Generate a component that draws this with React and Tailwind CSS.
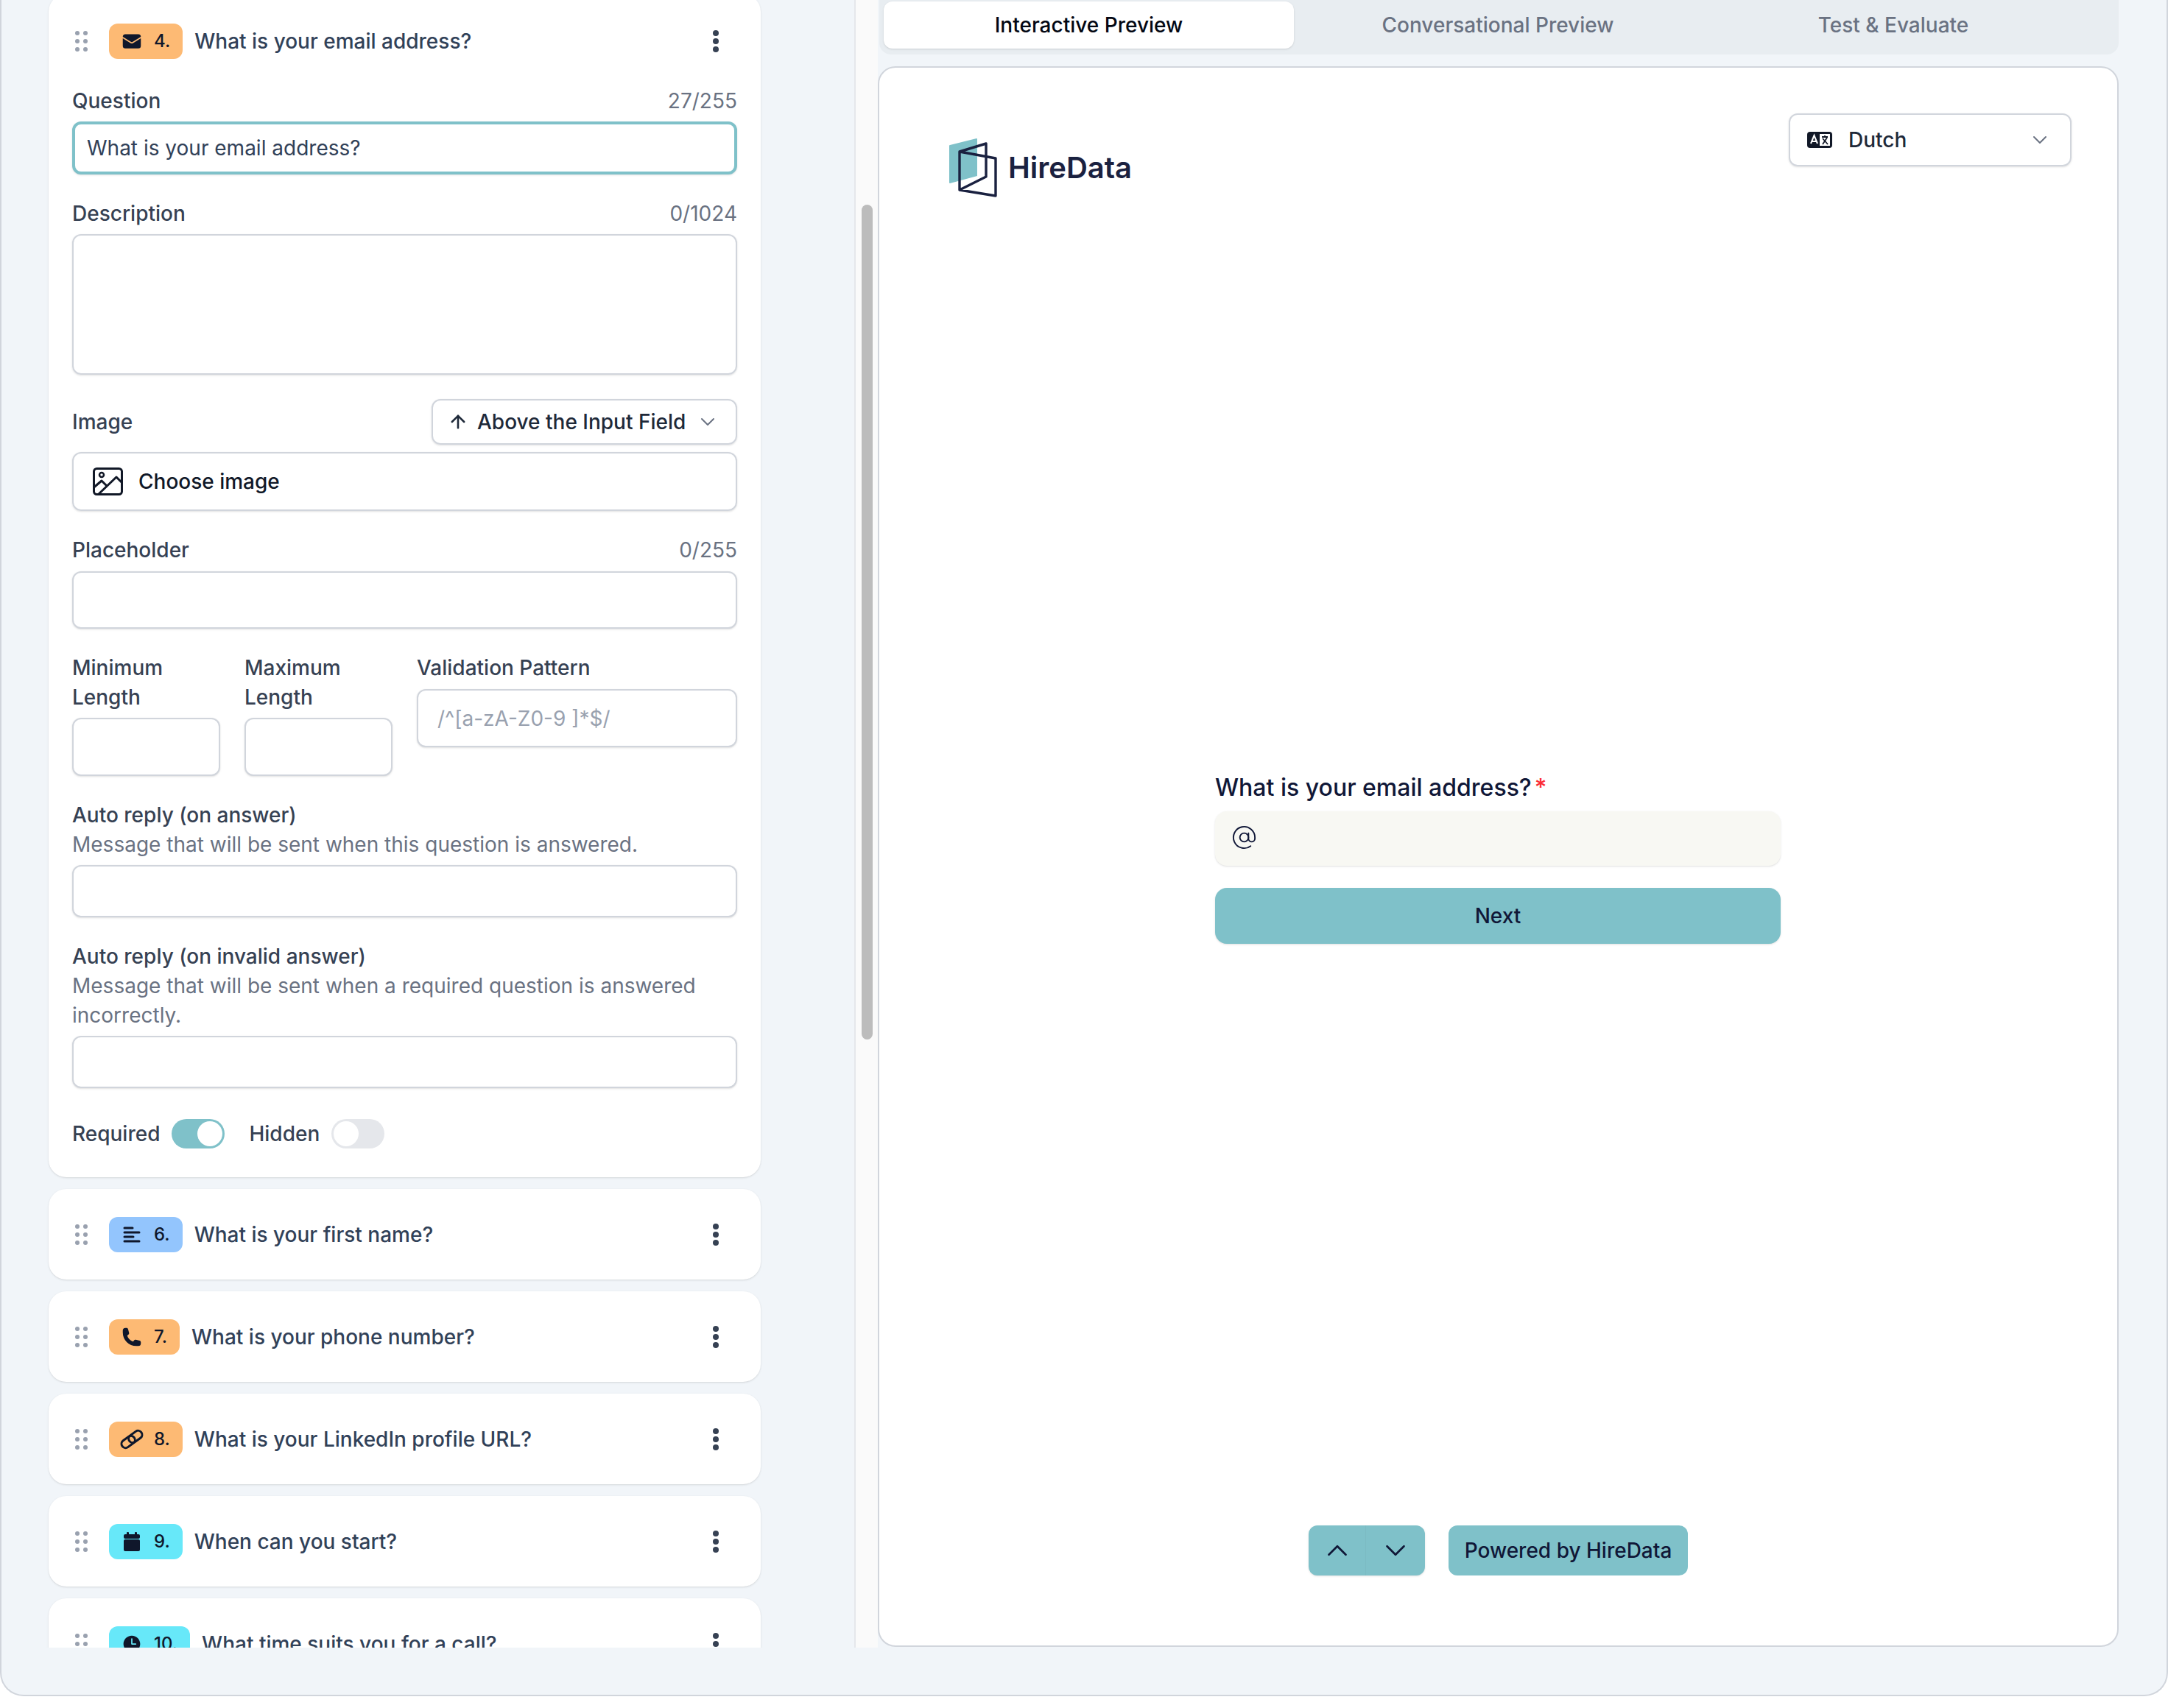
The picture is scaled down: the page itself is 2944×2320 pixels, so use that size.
import React from "react";
import { ArrowUp, AtSign, ChevronDown, ChevronUp } from "lucide-react";
import { HiEnvelope, HiPhone, HiClock } from "react-icons/hi2";

const DragHandle = () => (
  <svg width="24" height="28" viewBox="0 0 24 28" className="shrink-0 text-gray-400" fill="currentColor">
    <circle cx="7" cy="3" r="3" />
    <circle cx="18" cy="3" r="3" />
    <circle cx="7" cy="14" r="3" />
    <circle cx="18" cy="14" r="3" />
    <circle cx="7" cy="25" r="3" />
    <circle cx="18" cy="25" r="3" />
  </svg>
);

const Kebab = () => (
  <svg width="10" height="30" viewBox="0 0 10 30" className="ml-auto mr-[24px] shrink-0 text-gray-700" fill="currentColor">
    <circle cx="5" cy="4" r="4" />
    <circle cx="5" cy="15" r="4" />
    <circle cx="5" cy="26" r="4" />
  </svg>
);

const BarsIcon = () => (
  <svg width="28" height="28" viewBox="0 0 28 28" stroke="currentColor" strokeWidth="3" strokeLinecap="round">
    <path d="M4 5h11M4 11h20M4 17h12M4 23h20" />
  </svg>
);

const LinkIcon = () => (
  <svg width="30" height="28" viewBox="0 0 30 28" fill="none" stroke="currentColor" strokeWidth="3" className="shrink-0 overflow-visible">
    <g transform="rotate(-36 15 14)">
      <rect x="-1" y="8.5" width="20" height="11" rx="5.5" />
      <rect x="11" y="8.5" width="20" height="11" rx="5.5" />
    </g>
  </svg>
);

const CalendarIcon = () => (
  <svg width="28" height="28" viewBox="0 0 28 28" fill="currentColor">
    <rect x="7" y="1" width="3" height="6" rx="1" />
    <rect x="18" y="1" width="3" height="6" rx="1" />
    <rect x="3" y="4" width="22" height="6" rx="2" />
    <rect x="3" y="11" width="22" height="16" rx="2" />
  </svg>
);

const ImageIcon = () => (
  <svg width="42" height="38" viewBox="0 0 42 38" fill="none" stroke="#111827" strokeWidth="3" className="shrink-0">
    <rect x="1.5" y="1.5" width="38" height="35" rx="4" />
    <circle cx="12" cy="10" r="3" strokeWidth="2.5" />
    <path d="M1.5 27 12 18l7 7M8 36 32 13l8 8" strokeLinejoin="round" />
  </svg>
);

const TranslateIcon = () => (
  <svg width="34" height="22" viewBox="0 0 34 22" className="shrink-0">
    <rect width="34" height="22" rx="4" fill="#111827" />
    <rect x="17" y="3" width="14" height="16" fill="#fff" />
    <path d="M5 16 9.5 5 14 16M6.5 13h6" fill="none" stroke="#fff" strokeWidth="2" />
    <path d="M20 7h8M24 5v2M27 8l-6 9M21 9l7 8" fill="none" stroke="#111827" strokeWidth="1.8" />
  </svg>
);

const Logo = () => (
  <svg width="66" height="80" viewBox="0 0 66 80" className="shrink-0">
    <path d="M1 9 37 0a1 1 0 0 1 1 1v50L1 61a1 1 0 0 1-1-1V10a1 1 0 0 1 1-1Z" fill="#7fc1c9" />
    <path
      d="M14 18 50 7v45L14 70V18Zm0 0 49 9v51l-49-8"
      fill="none"
      stroke="#1a2140"
      strokeWidth="3.4"
      strokeLinejoin="round"
    />
  </svg>
);

const Badge = ({ color, icon, num }) => (
  <div className={`flex h-[48px] shrink-0 items-center gap-[16px] rounded-[12px] px-[17px] text-[24px] font-medium text-slate-900 ${color}`}>
    <span className="flex w-[28px] justify-center">{icon}</span>
    <span>{num}</span>
  </div>
);

const Head = ({ color, icon, num, title, gap = "gap-[16px]" }) => (
  <div className="flex h-[48px] items-center">
    <DragHandle />
    <div className={`ml-[26px] flex items-center ${gap}`}>
      <Badge color={color} icon={icon} num={num} />
      <span className="text-[28px] font-medium text-slate-700">{title}</span>
    </div>
    <Kebab />
  </div>
);

const Label = ({ children, count }) => (
  <div className="flex h-[40px] items-center justify-between text-[28px] leading-[40px]">
    <span className="font-medium text-gray-700">{children}</span>
    {count && <span className="text-gray-500">{count}</span>}
  </div>
);

const Field = ({ h = "h-[78px]", className = "", value, placeholder, focus }) => (
  <input
    readOnly
    value={value || ""}
    placeholder={placeholder}
    className={`block w-full rounded-[12px] bg-white text-[28px] text-slate-700 shadow-sm outline-none placeholder:text-gray-400 ${
      focus ? "border-[4px] border-[#7fc1c9] px-[16px]" : "border-2 border-gray-300 px-[26px]"
    } ${h} ${className}`}
  />
);

const Toggle = ({ on }) => (
  <div
    className={`flex h-[40px] w-[72px] items-center rounded-full p-[3px] ${
      on ? "justify-end bg-[#7fc1c9]" : "justify-start bg-gray-200"
    }`}
  >
    <div className="h-[34px] w-[34px] rounded-full bg-white" />
  </div>
);

const Row = (props) => (
  <div className="mt-[16px] h-[123px] w-[967px] shrink-0 rounded-[24px] bg-white px-[32px] pt-[38px] shadow">
    <Head {...props} />
  </div>
);

const rows = [
  { color: "bg-[#93c5fd]", icon: <BarsIcon />, num: "6.", title: "What is your first name?" },
  { color: "bg-[#fdba74]", icon: <HiPhone size={28} />, num: "7.", title: "What is your phone number?" },
  { color: "bg-[#fdba74]", icon: <LinkIcon />, num: "8.", title: "What is your LinkedIn profile URL?" },
  { color: "bg-[#67e8f9]", icon: <CalendarIcon />, num: "9.", title: "When can you start?" },
  { color: "bg-[#67e8f9]", icon: <HiClock size={28} />, num: "10.", title: "What time suits you for a call?" },
];

const App = () => {
  return (
    <div className="h-[2320px] w-[2944px] bg-white font-['Inter',sans-serif]">
      <div className="h-[2304px] overflow-hidden rounded-b-[32px] border-x-2 border-b-2 border-gray-300 bg-[#f1f5f9]">
        <div className="flex h-[2238px]">
          {/* Question list */}
          <div className="w-[1160px] shrink-0 overflow-hidden border-r-2 border-gray-200 pl-[64px]">
            <div className="-mt-[8px] w-[967px] rounded-[24px] bg-white px-[32px] pb-[38px] pt-[40px] shadow">
              <Head color="bg-[#fdba74]" icon={<HiEnvelope size={28} />} num="4." title="What is your email address?" />

              <div className="mt-[37px] flex flex-col gap-[33px]">
                <div>
                  <Label count="27/255">Question</Label>
                  <Field focus h="h-[72px] mt-[8px]" value="What is your email address?" />
                </div>

                <div>
                  <Label count="0/1024">Description</Label>
                  <div className="mt-[8px] h-[191px] rounded-[12px] border-2 border-gray-300 shadow-sm" />
                </div>

                <div>
                  <div className="flex items-center justify-between">
                    <span className="text-[28px] font-medium text-gray-700">Image</span>
                    <div className="flex h-[62px] w-[415px] items-center rounded-[12px] border-2 border-gray-300 pl-[20px] pr-[22px] text-[28px] font-medium text-gray-800 shadow-sm">
                      <ArrowUp size={28} strokeWidth={2.2} />
                      <span className="ml-[12px]">Above the Input Field</span>
                      <ChevronDown size={32} strokeWidth={1.5} className="ml-auto text-gray-500" />
                    </div>
                  </div>
                  <div className="mt-[10px] flex h-[80px] items-center gap-[20px] rounded-[12px] border-2 border-gray-300 pl-[26px] shadow-sm">
                    <ImageIcon />
                    <span className="text-[28px] font-medium text-gray-900">Choose image</span>
                  </div>
                </div>

                <div>
                  <Label count="0/255">Placeholder</Label>
                  <Field h="h-[78px] mt-[9px]" />
                </div>

                <div className="flex gap-[33px]">
                  <div className="w-[201px] text-[28px] font-medium leading-[40px] text-gray-700">
                    Minimum Length
                    <Field h="h-[79px] mt-[8px]" />
                  </div>
                  <div className="w-[201px] text-[28px] font-medium leading-[40px] text-gray-700">
                    Maximum Length
                    <Field h="h-[79px] mt-[8px]" />
                  </div>
                  <div className="flex-1 text-[28px] font-medium leading-[40px] text-gray-700">
                    Validation Pattern
                    <Field h="h-[79px] mt-[9px] font-normal" placeholder="/^[a-zA-Z0-9 ]*$/" />
                  </div>
                </div>

                <div>
                  <Label>Auto reply (on answer)</Label>
                  <p className="text-[28px] leading-[40px] text-gray-500">Message that will be sent when this question is answered.</p>
                  <Field h="h-[71px] mt-[8px]" />
                </div>

                <div>
                  <Label>Auto reply (on invalid answer)</Label>
                  <p className="text-[28px] leading-[40px] text-gray-500">
                    Message that will be sent when a required question is answered incorrectly.
                  </p>
                  <Field h="h-[71px] mt-[8px]" />
                </div>

                <div className="mt-[8px] flex items-center text-[28px] font-medium text-gray-700">
                  <span>Required</span>
                  <span className="ml-[16px]"><Toggle on /></span>
                  <span className="ml-[33px]">Hidden</span>
                  <span className="ml-[16px]"><Toggle /></span>
                </div>
              </div>
            </div>

            {rows.map((row) => (
              <Row key={row.num} {...row} />
            ))}
          </div>

          {/* Scrollbar */}
          <div className="w-[30px] shrink-0 bg-neutral-50 pl-[8px] pt-[278px]">
            <div className="h-[1134px] w-[15px] rounded-full bg-neutral-400/70" />
          </div>

          {/* Preview */}
          <div className="flex w-[1685px] shrink-0 flex-col">
            <div className="ml-[2px] flex h-[74px] items-start rounded-b-[16px] bg-[#e8edf1] pl-[6px] pt-[2px] text-[28px] font-medium text-gray-500">
              <div className="flex h-[64px] w-[557px] items-center justify-center rounded-[12px] bg-white text-gray-950 shadow-sm">Interactive Preview</div>
              <div className="flex h-[64px] w-[554px] items-center justify-center">Conversational Preview</div>
              <div className="flex h-[64px] w-[520px] items-center justify-center">Test &amp; Evaluate</div>
            </div>

            <div className="mt-[16px] flex h-[2147px] flex-col rounded-[24px] border-2 border-gray-300 bg-white pl-[95px] pr-[62px] pt-[62px]">
              <div className="flex items-start justify-between">
                <div className="mt-[34px] flex items-center gap-[14px]">
                  <Logo />
                  <span className="text-[40px] font-semibold text-[#1a2140]">HireData</span>
                </div>
                <div className="flex h-[72px] w-[384px] items-center rounded-[12px] border-2 border-gray-300 pl-[23px] pr-[25px] text-[28px] font-medium text-gray-800 shadow-sm">
                  <TranslateIcon />
                  <span className="ml-[22px]">Dutch</span>
                  <ChevronDown size={32} strokeWidth={1.5} className="ml-auto text-gray-500" />
                </div>
              </div>

              <div className="ml-[361px] mt-[782px] w-[768px]">
                <div className="text-[32px] font-medium leading-[40px] text-[#101737]">
                  What is your email address?<span className="ml-[4px] text-red-500">*</span>
                </div>
                <div className="mt-[12px] flex h-[74px] items-center rounded-[16px] bg-[#f8f8f3] pl-[22px] shadow-sm">
                  <AtSign size={35} strokeWidth={1.3} className="mb-[3px] text-[#101737]" />
                </div>
                <div className="mt-[30px] flex h-[76px] items-center justify-center rounded-[16px] bg-[#7fc1c9] text-[28px] font-medium text-[#101737] shadow-sm">
                  Next
                </div>
              </div>

              <div className="ml-[488px] mt-[790px] flex h-[68px] gap-[32px] text-[#101737]">
                <div className="flex rounded-[12px] bg-[#7fc1c9] shadow-sm">
                  <div className="flex w-[78px] items-center justify-center border-r border-black/[0.03]">
                    <ChevronUp size={46} strokeWidth={1.4} />
                  </div>
                  <div className="flex w-[80px] items-center justify-center">
                    <ChevronDown size={46} strokeWidth={1.4} />
                  </div>
                </div>
                <div className="flex w-[325px] items-center justify-center rounded-[12px] bg-[#7fc1c9] text-[28px] font-medium">
                  Powered by HireData
                </div>
              </div>
            </div>
          </div>
        </div>
      </div>
    </div>
  );
};

export default App;
